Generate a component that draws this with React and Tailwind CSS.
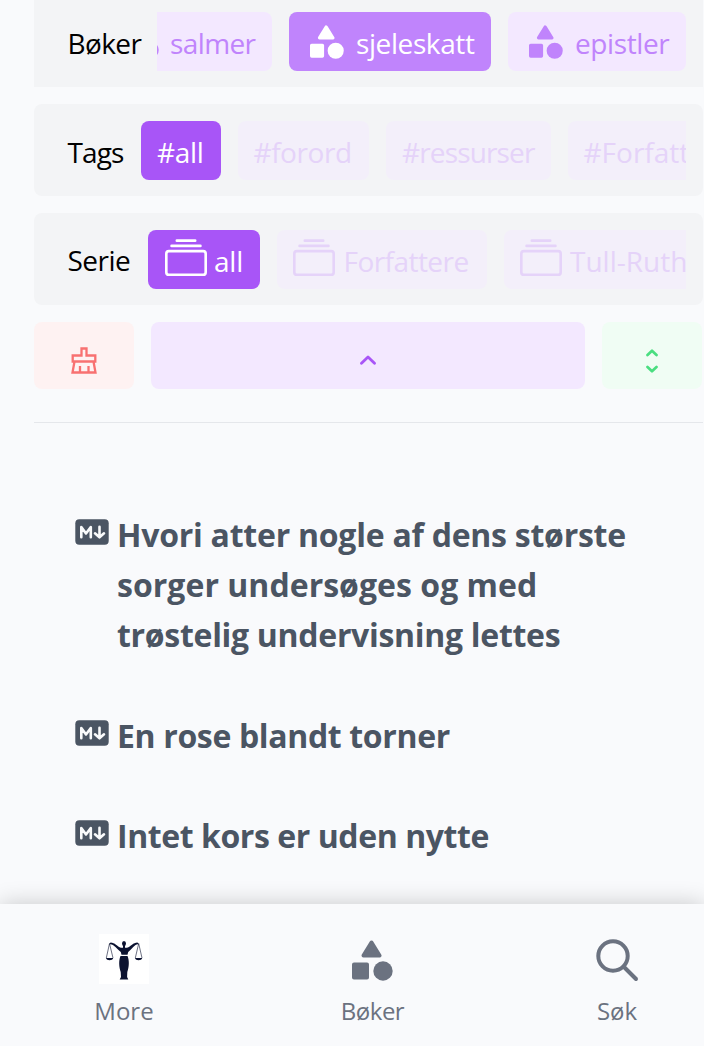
import React from "react";

function Shapes({ className }) {
  return (
    <svg viewBox="0 0 41 41" className={className} fill="currentColor" stroke="currentColor" strokeWidth="4" strokeLinejoin="round">
      <path d="M19.500 2.500 L27.500 15.500 H11.500 Z" />
      <rect x="2" y="24.500" width="13" height="13" />
      <circle cx="31" cy="31" r="9.700" stroke="none" />
    </svg>
  );
}

function Collection({ className }) {
  return (
    <svg viewBox="0 0 16 16" className={className} fill="none" stroke="currentColor" strokeLinecap="round">
      <path d="M4.500 1h7M2.500 3h11" />
      <rect x=".5" y="5" width="15" height="9" rx="1" />
    </svg>
  );
}

function Markdown() {
  return (
    <svg viewBox="0 0 34 26" className="mt-[9px] h-[26px] w-[34px] shrink-0">
      <rect x=".3" y=".3" width="33.400" height="25.400" rx="4" fill="#4b5563" />
      <g fill="none" stroke="#f9fafb" strokeWidth="2.600" strokeLinejoin="round" strokeLinecap="round">
        <path d="M6.300 18.300V8l4.700 6.500L15.800 8v10.300M24.500 7.800v10M20 14.300l4.500 4 4.500-4" />
      </g>
    </svg>
  );
}

function Lady() {
  return (
    <svg viewBox="0 0 50 50" className="h-[50px] w-[50px] bg-white">
      <g fill="#0b1230">
        <ellipse cx="25" cy="9.500" rx="2" ry="2.600" />
        <path d="M24 11h2v3h-2z" />
        <path d="M11.500 8.500c4.500 0 6.500 4 10.500 5.300h6c4-1.300 6-5.300 10.500-5.300l1.500 2c-4-1.200-6.500 4.500-10.800 7.500l-.7 2.800h-6l-.7-2.800C17.500 15 14.500 9.300 10 10.500z" />
        <path d="M21.500 22h7c2 4.500 1.600 11-.2 16l-.2 5 1.200 2.500h-8.600L22 43l-.3-5c-1.700-5-2.200-11.500-.2-16z" />
        <path d="M7 24h7.200c-.5 3-6.700 3-7.200 0zM36 24h7.200c-.5 3-6.700 3-7.200 0z" />
      </g>
      <path d="M10.500 9.500 7.300 24M10.500 9.500 14 24M39.700 9.500 36.300 24M39.700 9.500 43 24" stroke="#0b1230" strokeWidth=".6" />
    </svg>
  );
}

const chip = "flex h-[58.500px] shrink-0 items-center rounded-[8px] text-[28px] ";
const faded = "bg-[#f3effa] text-[#e5d3f9] ";

function Row({ label, labelClass, className, children }) {
  return (
    <div className={"flex overflow-hidden bg-[#f3f4f6] pl-[34px] pr-[17px] " + className}>
      <span className={"shrink-0 text-[28px] leading-[44px] text-black " + labelClass}>{label}</span>
      <div className="flex min-w-0 flex-1 gap-[17px] overflow-hidden">{children}</div>
    </div>
  );
}

function Article({ children }) {
  return (
    <li className="flex gap-[8px]">
      <Markdown />
      <h2 className="text-[32px] font-bold leading-[50px] text-[#4b5563]">{children}</h2>
    </li>
  );
}

export default function App() {
  return (
    <div className="flex h-[1046px] w-[704px] flex-col overflow-hidden whitespace-nowrap bg-[#f9fafc] font-['Open_Sans','Noto_Sans',sans-serif]">
      <main className="flex h-[904px] flex-col pl-[33.500px] pr-px">
        <Row label="Bøker" labelClass="w-[89.500px] pt-[9px] tracking-[-0.6px]" className="h-[87px] pt-[12px]">
          <div className={chip + "w-[115px] overflow-hidden rounded-l-none bg-[#f3e8ff] text-[#c084fc]"}>
            <Shapes className="-ml-[31px] mr-[11px] h-[33px] w-[33px] shrink-0" />
            <span className="pt-[3px] tracking-[-0.600px]">salmer</span>
          </div>
          <div className={chip + "w-[202px] bg-[#c084fc] pl-[21px] text-white"}>
            <Shapes className="mr-[13px] mt-px h-[34px] w-[34px] shrink-0" />
            <span className="-ml-px pt-[3px] tracking-[-0.400px]">sjeleskatt</span>
          </div>
          <div className={chip + "w-[178px] bg-[#f3e8ff] pl-[21px] text-[#c084fc]"}>
            <Shapes className="mr-[12px] mt-px h-[34px] w-[34px] shrink-0" />
            <span className="pt-[3px] tracking-[-0.400px]">epistler</span>
          </div>
        </Row>
        <Row label="Tags" labelClass="w-[73.500px] pt-[9px] tracking-[-0.900px]" className="mt-[17px] h-[92px] rounded-[8px] pt-[17px]">
          <div className={chip + "w-[79.500px] bg-[#a855f7] pl-[16px] text-white"}><span className="pt-[3px] tracking-[-0.300px]">#all</span></div>
          <div className={chip + faded + "w-[131px] pl-[16px]"}><span className="pt-[3px] tracking-[-0.450px]">#forord</span></div>
          <div className={chip + faded + "w-[165px] pl-[16.500px]"}><span className="pt-[3px] tracking-[-0.850px]">#ressurser</span></div>
          <div className={chip + faded + "w-[200px] pl-[16px]"}><span className="pt-[3px]">#Forfattere</span></div>
        </Row>
        <Row label="Serie" labelClass="w-[80.500px] pt-[8px] tracking-[-0.500px]" className="mt-[17px] h-[92px] rounded-[8px] pt-[17px]">
          <div className={chip + "w-[111.500px] bg-[#a855f7] pl-[17px] text-white"}>
            <Collection className="mr-[7px] h-[42px] w-[42px]" /><span className="pt-[4px] tracking-[-0.200px]">all</span>
          </div>
          <div className={chip + faded + "w-[210px] pl-[16px]"}>
            <Collection className="mr-[9px] h-[42px] w-[42px]" /><span className="pt-[4px] tracking-[-0.550px]">Forfattere</span>
          </div>
          <div className={chip + faded + "w-[240px] pl-[16.500px]"}>
            <Collection className="mr-[8px] h-[42px] w-[42px]" /><span className="pt-[4px]">Tull-Ruth</span>
          </div>
        </Row>
        <div className="mt-[16.500px] flex h-[67px] shrink-0 gap-[17px]">
          <button className="flex w-[100px] items-center justify-center rounded-[8px] bg-[#fef2f2] pt-[11px]">
            <svg viewBox="0 0 26 27" className="h-[27px] w-[26px]" fill="none" stroke="#f87171" strokeWidth="2.300">
              <path d="M1.700 8.500H10.500V1.500H15.500V8.500H24.300V14.500H1.700zM3.500 14.500 1.500 25.500H24.500L22.500 14.500M9 25.500V19M17.500 25.500V19" />
            </svg>
          </button>
          <button className="flex w-[434.500px] items-center justify-center rounded-[8px] bg-[#f3e8ff] pt-[10px]">
            <svg viewBox="0 0 16 10" className="h-[10px] w-[16px]" fill="none" stroke="#a855f7" strokeWidth="2.800" strokeLinecap="round" strokeLinejoin="round">
              <path d="M1.500 8.300 8 2 14.500 8.300" />
            </svg>
          </button>
          <button className="flex w-[100px] items-center justify-center rounded-[8px] bg-[#f0fdf4] pt-[11px]">
            <svg viewBox="0 0 12 24" className="h-[24px] w-[12px]" fill="none" stroke="#4ade80" strokeWidth="2.700" strokeLinecap="round" strokeLinejoin="round">
              <path d="M1.500 6 6 1.700 10.500 6M1.500 18 6 22.300 10.500 18" />
            </svg>
          </button>
        </div>
        <hr className="mt-[33.500px] border-t border-[#e5e7eb]" />
        <ul className="flex flex-col gap-[50.500px] pl-[41.500px] pt-[87px]">
          <Article>
            <span className="block tracking-[-0.250px]">Hvori atter nogle af dens største</span>
            <span className="block tracking-[0.030px]">sorger undersøges og med</span>
            <span className="block tracking-[-0.300px]">trøstelig undervisning lettes</span>
          </Article>
          <Article><span className="block tracking-[-0.350px]">En rose blandt torner</span></Article>
          <Article><span className="block tracking-[-0.430px]">Intet kors er uden nytte</span></Article>
        </ul>
      </main>
      <nav className="relative flex h-[142px] shrink-0 gap-[167.500px] bg-[#f9fafc] pl-[84px] pt-[30px] text-[24px] leading-[34px] text-[#6b7280] shadow-[0_0_22px_rgba(0,0,0,0.2)]">
        <a className="flex w-[80px] flex-col items-center"><Lady /><span className="mt-[10px]">More</span></a>
        <a className="flex w-[82px] flex-col items-center"><Shapes className="mb-[3px] mt-[6px] h-[41px] w-[41px]" /><span className="mt-[10px] tracking-[-0.500px]">Bøker</span></a>
        <a className="-ml-[4px] flex w-[80px] flex-col items-center">
          <svg viewBox="0 0 44 44" className="mb-[2px] mt-[4px] h-[44px] w-[44px]" fill="none" stroke="currentColor" strokeWidth="4" strokeLinecap="round">
            <circle cx="18" cy="18" r="14.700" /><path d="m29 29 12 12" />
          </svg>
          <span className="mt-[10px]">Søk</span>
        </a>
      </nav>
    </div>
  );
}
